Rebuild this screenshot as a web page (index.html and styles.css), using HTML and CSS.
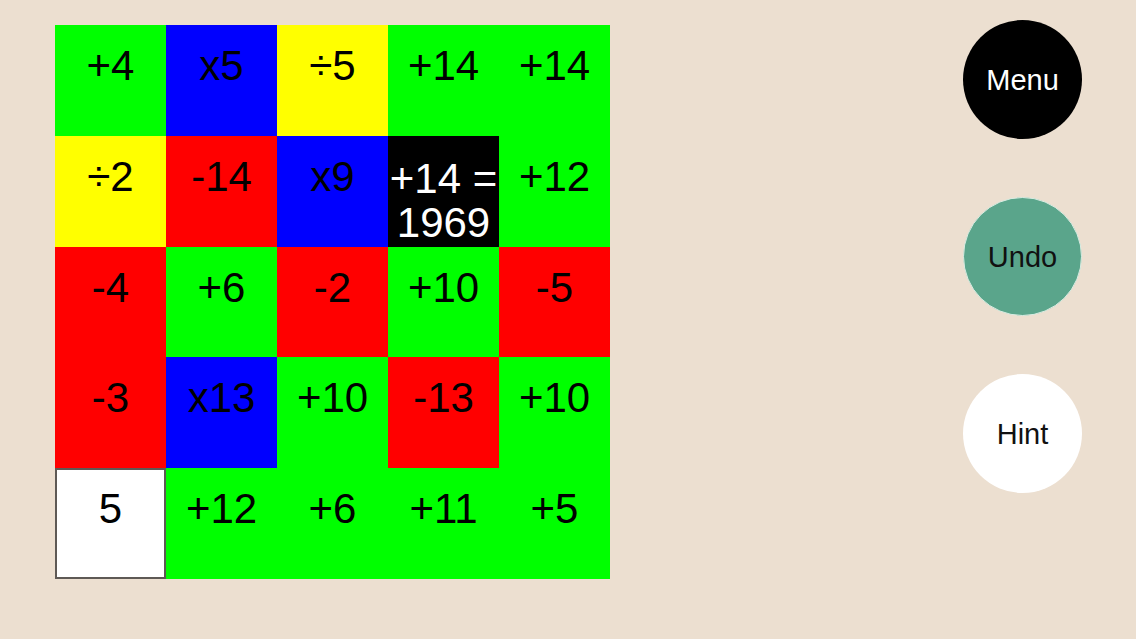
FILE: index.html
```html
<!DOCTYPE html>
<html>
<head>
<meta charset="utf-8">
<link rel="stylesheet" href="styles.css">
</head>
<body>
<div class="page">
  <div class="board">
    <div class="cell green">+4</div>
    <div class="cell blue">x5</div>
    <div class="cell yellow">÷5</div>
    <div class="cell green">+14</div>
    <div class="cell green">+14</div>

    <div class="cell yellow">÷2</div>
    <div class="cell red">-14</div>
    <div class="cell blue">x9</div>
    <div class="cell black">+14 = 1969</div>
    <div class="cell green">+12</div>

    <div class="cell red">-4</div>
    <div class="cell green">+6</div>
    <div class="cell red">-2</div>
    <div class="cell green">+10</div>
    <div class="cell red">-5</div>

    <div class="cell red">-3</div>
    <div class="cell blue">x13</div>
    <div class="cell green">+10</div>
    <div class="cell red">-13</div>
    <div class="cell green">+10</div>

    <div class="cell white">5</div>
    <div class="cell green">+12</div>
    <div class="cell green">+6</div>
    <div class="cell green">+11</div>
    <div class="cell green">+5</div>
  </div>
  <div class="controls">
    <div class="btn menu">Menu</div>
    <div class="btn undo">Undo</div>
    <div class="btn hint">Hint</div>
  </div>
</div>
</body>
</html>
```

FILE: styles.css
```css
html, body {
  margin: 0;
  padding: 0;
  background: #ecdfd0;
  width: 1136px;
  height: 639px;
  overflow: hidden;
  font-family: "Liberation Sans", Arial, sans-serif;
}
.page {
  display: flex;
  justify-content: space-between;
  align-items: flex-start;
  padding: 25px 54px 0 55px;
}
.board {
  display: grid;
  grid-template-columns: repeat(5, 111px);
  grid-template-rows: repeat(5, 110.8px);
}
.cell {
  box-sizing: border-box;
  padding-top: 19px;
  font-size: 42px;
  line-height: 44px;
  text-align: center;
  color: #000;
  overflow: hidden;
}
.green { background: #00ff00; }
.blue { background: #0000ff; }
.yellow { background: #ffff00; }
.red { background: #ff0000; }
.black { background: #000; color: #fff; padding-top: 21px; }
.white { background: #fff; border: 2px solid #5e5955; padding-top: 17px; }
.controls {
  display: flex;
  flex-direction: column;
  gap: 57px;
  margin-top: -5px;
}
.btn {
  width: 119px;
  height: 119px;
  border-radius: 50%;
  display: flex;
  align-items: center;
  justify-content: center;
  font-size: 29px;
  padding-top: 2px;
  box-sizing: border-box;
}
.menu { background: #000; color: #fff; }
.undo { background: #5aa58b; color: #111; border: 1px solid #d8ece2; margin-top: 1px; }
.hint { background: #fff; color: #111; margin-top: 1px; }
```
